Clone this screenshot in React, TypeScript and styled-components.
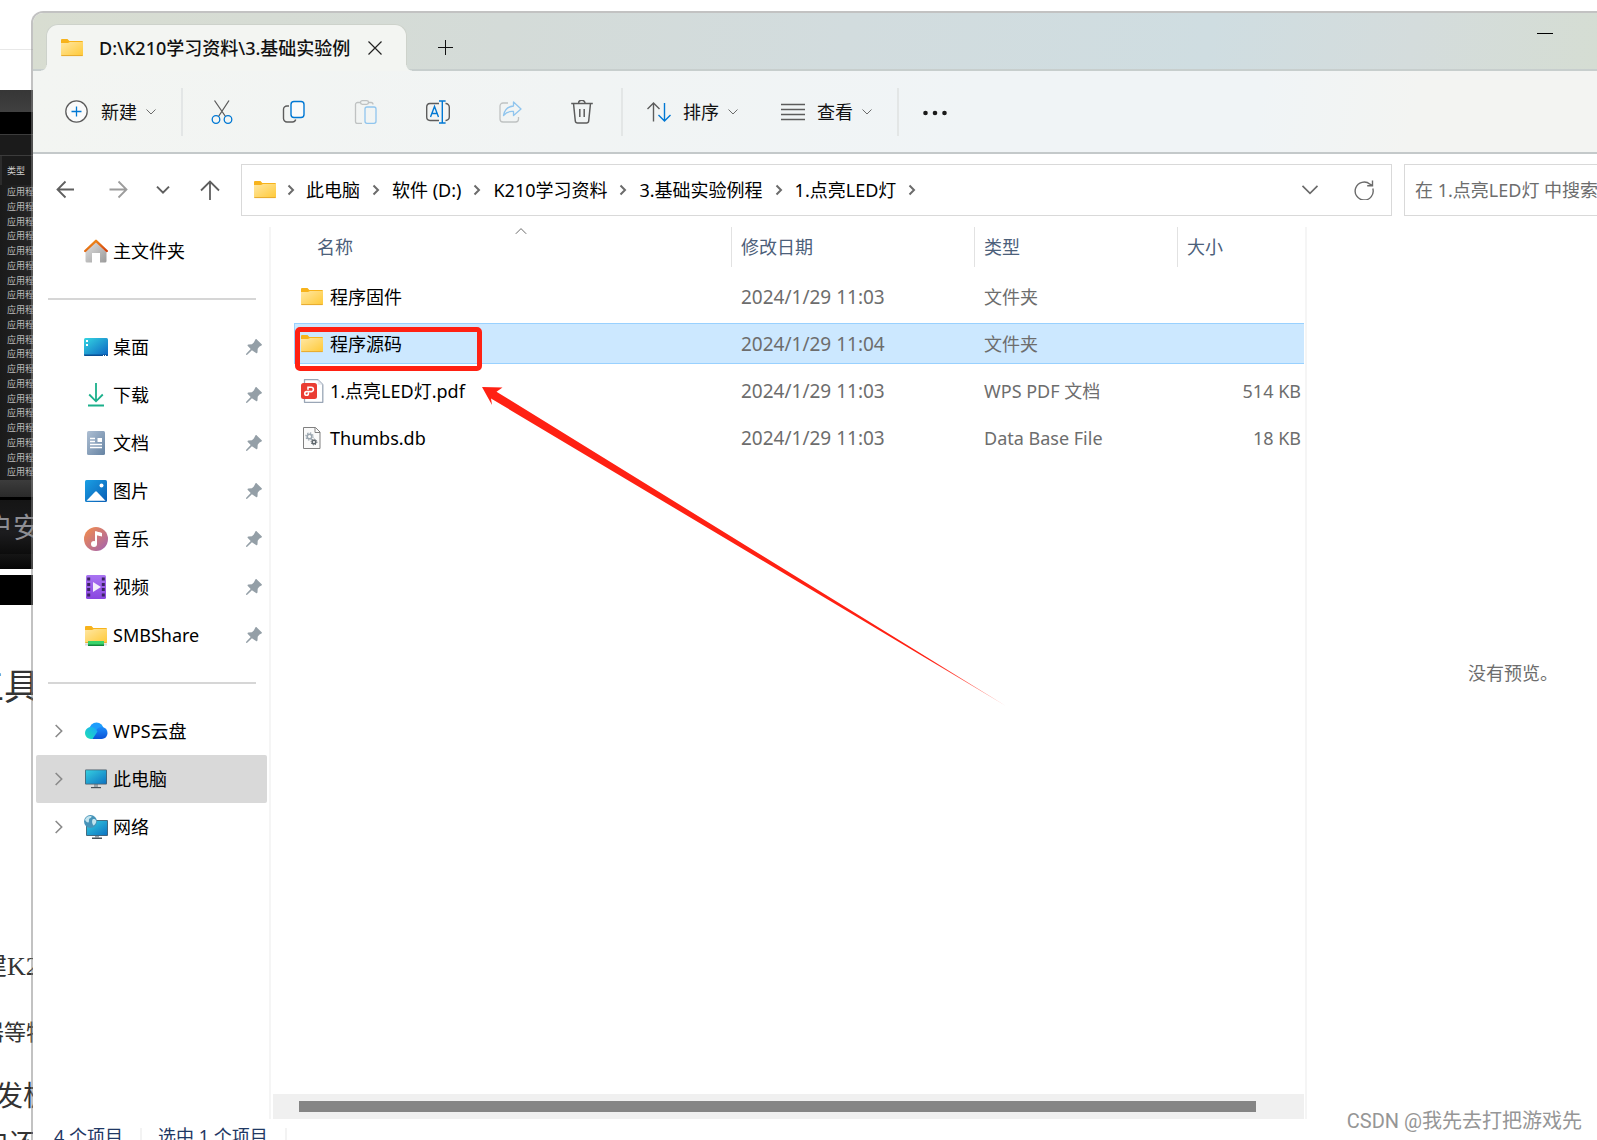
import React from 'react';
import styled, { createGlobalStyle } from 'styled-components';

const GlobalStyle = createGlobalStyle`
  *, *::before, *::after { box-sizing: border-box; }
  html, body { margin: 0; padding: 0; }
  body {
    background: #fff;
    color: #111;
    font: 18px/24px 'Noto Sans', 'Noto Sans CJK SC', sans-serif;
  }
  button, input { font: inherit; color: inherit; }
`;

/* ---------- page shell ---------- */

const Desktop = styled.div`
  position: relative;
  display: flex;
  height: 100vh;
  overflow: hidden;
`;

const Backdrop = styled.aside`
  flex: none;
  width: 33px;
  height: 1160px;
  overflow: hidden;
  white-space: nowrap;
  color: #333;
`;

const BackBand = styled.div<{ $h: number; $bg?: string; $line?: string }>`
  height: ${(p) => p.$h}px;
  background: ${(p) => p.$bg || 'transparent'};
  border-bottom: ${(p) => (p.$line ? `1px solid ${p.$line}` : '0')};
`;

const BackLabel = styled.div`
  height: 29px;
  padding-left: 5px;
  border-left: 2px solid #2c2c2c;
  background: #1b1b1b;
  color: #cfcfcf;
  font-size: 9px;
  line-height: 29px;
`;

const BackRows = styled.div`
  display: grid;
  grid-auto-rows: 1fr;
  height: 295px;
  padding-left: 7px;
  background: linear-gradient(90deg, #1a1a1a, #262626);
  color: #bdbdbd;
  font-size: 9px;
  line-height: 14px;
`;

const BackText = styled.div<{ $h: number; $size: number; $indent: number; $serif?: boolean; $dark?: boolean }>`
  height: ${(p) => p.$h}px;
  line-height: ${(p) => p.$h}px;
  font-size: ${(p) => p.$size}px;
  text-indent: ${(p) => p.$indent}px;
  color: ${(p) => (p.$dark ? '#8d8d92' : '#333')};
  background: ${(p) => (p.$dark ? 'linear-gradient(#151515, #1c1c1e 60%, #0c0c0c)' : 'transparent')};
  font-family: ${(p) =>
    p.$serif
      ? "'Liberation Serif', 'Noto Sans CJK SC', serif"
      : "'Noto Sans', 'Noto Sans CJK SC', sans-serif"};
`;

const Window = styled.main`
  display: flex;
  flex: 1;
  flex-direction: column;
  min-width: 0;
  height: calc(100vh + 4px);
  margin: 11px 0 0 -2px;
  border: 2px solid rgba(133, 133, 133, 0.5);
  border-width: 2px 0 0 2px;
  border-radius: 12px 0 0 0;
  background: #fff;
  background-clip: padding-box;
  overflow: hidden;
`;

/* ---------- title bar ---------- */

const TitleBar = styled.header`
  display: flex;
  flex: none;
  height: 58px;
  padding: 11px 20px 0 13px;
  border-bottom: 2px solid #c7cecd;
  background: linear-gradient(100deg, #d8ddd1, #d4dbd8 30%, #d2dcde 52%, #cfdde1 75%, #d4dcdc 88%, #d5ddd3);
`;

const Tab = styled.div`
  position: relative;
  display: flex;
  align-items: center;
  width: 361px;
  margin-bottom: -2px;
  padding: 0 11px 0 13px;
  border: 1px solid #cdd2cb;
  border-bottom: 0;
  border-radius: 12px 12px 0 0;
  background: #f3f5f2;

  &::before,
  &::after {
    content: '';
    position: absolute;
    bottom: 0;
    width: 6px;
    height: 6px;
  }
  &::before {
    right: 100%;
    background: radial-gradient(circle at 0 0, transparent 5px, #f3f5f2 6px);
  }
  &::after {
    left: 100%;
    background: radial-gradient(circle at 100% 0, transparent 5px, #f3f5f2 6px);
  }
`;

const TabTitle = styled.span`
  flex: 1;
  min-width: 0;
  margin: 0 4px 0 15px;
  overflow: hidden;
  white-space: nowrap;
  font-weight: 500;
`;

const PlainButton = styled.button<{ $w?: number }>`
  display: flex;
  flex: none;
  align-items: center;
  justify-content: center;
  width: ${(p) => p.$w || 40}px;
  height: 40px;
  padding: 0;
  border: 0;
  background: none;
`;

const TabActions = styled.div`
  display: flex;
  flex: 1;
  align-items: center;
  padding-left: 18px;
`;

const WindowControls = styled.div`
  margin-top: -11px;
`;

/* ---------- toolbar ---------- */

const Toolbar = styled.div`
  display: flex;
  flex: none;
  align-items: center;
  height: 83px;
  padding-left: 8px;
  border-bottom: 2px solid #c4c9ca;
  background: linear-gradient(100deg, #f3f5f2, #f1f4f4 35%, #f0f4f6 60%, #f0f4f6 78%, #f3f4f2 88%);
`;

const ToolGroup = styled.div`
  display: flex;
  margin: 0 3px;
`;

const MenuButton = styled.button<{ $end?: number }>`
  display: flex;
  align-items: center;
  height: 48px;
  padding: 0 ${(p) => p.$end || 24}px 0 24px;
  border: 0;
  background: none;
  white-space: nowrap;

  span { margin: 0 8px 0 12px; }
`;

const Divider = styled.div`
  flex: none;
  width: 2px;
  height: 48px;
  background: #e3e6e6;
`;

/* ---------- address row ---------- */

const AddressRow = styled.div`
  display: flex;
  flex: none;
  height: 73px;
  padding: 10px 0 11px 8px;
`;

const NavButtons = styled.nav`
  display: flex;
  align-items: center;
`;

const AddressBox = styled.div`
  display: flex;
  flex: 1;
  align-items: center;
  min-width: 0;
  padding-left: 11px;
  border: 1px solid #d9d9d9;
`;

const Crumbs = styled.ol`
  display: flex;
  flex: 1;
  margin: 0;
  padding: 0;
  list-style: none;
  white-space: nowrap;
`;

const Crumb = styled.li`
  display: flex;
  align-items: center;

  svg { margin: 0 9px 0 8px; }
  a { color: #000; text-decoration: none; }
  a + svg { margin: 0 10px; }
`;

const SearchBox = styled.input`
  width: 193px;
  margin-left: 12px;
  padding: 0 0 0 10px;
  border: 1px solid #d9d9d9;
  border-right: 0;
  border-radius: 0;
  background: #fff;
  outline: 0;

  &::placeholder { color: #6d6d6d; opacity: 1; }
`;

/* ---------- body ---------- */

const Body = styled.div`
  display: flex;
  flex: 1;
  min-height: 0;
`;

const Sidebar = styled.nav`
  flex: none;
  width: 238px;
  border-right: 2px solid #f5f5f5;
`;

const SideItem = styled.a<{ $active?: boolean }>`
  display: grid;
  grid-template-columns: 33px 24px 1fr 16px;
  align-items: center;
  height: 48px;
  margin: 0 2px 0 3px;
  padding: 0 5px 0 15px;
  border-radius: 2px;
  background: ${(p) => (p.$active ? '#d9d9d9' : 'transparent')};
  color: #000;
  text-decoration: none;
  white-space: nowrap;

  span { padding-left: 5px; }
`;

const SideRule = styled.hr`
  height: 2px;
  margin: 23px 13px 23px 15px;
  border: 0;
  background: #d6d6d6;
`;

const FilePane = styled.section`
  position: relative;
  display: flex;
  flex: 1;
  flex-direction: column;
  justify-content: space-between;
  min-width: 0;
`;

const TableWrap = styled.div`
  padding: 0 1px 0 23px;
`;

const FileTable = styled.table`
  width: 100%;
  table-layout: fixed;
  border-collapse: collapse;
  white-space: nowrap;

  th, td { padding: 0; font-weight: 400; text-align: left; }
  th { height: 46px; vertical-align: top; color: #4c607a; }
  td { height: 47px; color: #6d6d6d; }
`;

const HeadCell = styled.div<{ $first?: boolean }>`
  position: relative;
  height: 40px;
  margin-left: ${(p) => (p.$first ? 16 : 0)}px;
  padding-left: ${(p) => (p.$first ? 7 : 9)}px;
  border-left: ${(p) => (p.$first ? 0 : 1)}px solid #e2e2e2;
  line-height: 40px;

  svg {
    position: absolute;
    top: 0;
    left: calc(50% - 6px);
  }
`;

const Cell = styled.div<{ $selected?: boolean; $kind?: 'name' | 'date' | 'size' }>`
  display: flex;
  align-items: center;
  gap: 6px;
  height: 41px;
  padding: ${(p) => (p.$kind === 'name' ? '0 0 0 5px' : '0 3px 0 10px')};
  justify-content: ${(p) => (p.$kind === 'size' ? 'flex-end' : 'flex-start')};
  border: 1px solid ${(p) => (p.$selected ? '#99d1ff' : 'transparent')};
  border-width: 1px 0 1px ${(p) => (p.$kind === 'name' ? 1 : 0)}px;
  background: ${(p) => (p.$selected ? '#cce8ff' : 'transparent')};
  color: ${(p) => (p.$kind === 'name' ? '#000' : '#6d6d6d')};
  font-size: ${(p) => (p.$kind === 'date' ? 19 : 18)}px;
`;

const ScrollTrack = styled.div`
  height: 25px;
  margin: 0 1px 0 2px;
  padding: 7px 48px 7px 26px;
  background: #f0f0f0;
`;

const ScrollThumb = styled.div`
  height: 11px;
  background: #858585;
`;

const Preview = styled.section`
  display: flex;
  flex: none;
  align-items: center;
  width: 292px;
  padding-left: 161px;
  border-left: 2px solid #f5f5f5;
  color: #6d6d6d;
  white-space: nowrap;
`;

const StatusBar = styled.footer`
  display: flex;
  flex: none;
  height: 36px;
  padding-left: 5px;
  color: #1f3864;
  line-height: 34px;
  white-space: nowrap;
`;

const StatusItem = styled.span`
  display: flex;
  padding-left: 16px;

  &::after {
    content: '';
    width: 2px;
    margin: 9px 0 0 17px;
    background: #f3f3f3;
  }
`;

/* ---------- annotations over the window ---------- */

const HighlightBox = styled.div`
  position: absolute;
  top: 100px;
  left: 24px;
  width: 187px;
  height: 44px;
  border: 5px solid #ff2113;
  border-radius: 5px;
`;

const ArrowMark = styled.svg`
  position: absolute;
  top: 159px;
  left: 211px;
`;

const Watermark = styled.div`
  position: absolute;
  right: 15px;
  bottom: 5px;
  color: #969696;
  font: 20px/28px Roboto, 'Noto Sans CJK SC', sans-serif;
`;

const Svg = styled.svg`
  display: block;
  flex: none;
  fill: none;
`;

/* ---------- icons ---------- */

const GREY = '#5c5c5c';
const BLUE = '#0078d4';

const Chevron = ({ size, d, color = '#6b6b6b', w = 1.5 }: { size: number; d: 'down' | 'right' | 'up'; color?: string; w?: number }) => (
  <Svg width={size} height={size} viewBox="0 0 12 12" stroke={color} strokeWidth={w} aria-hidden="true">
    {d === 'down' && <path d="M1.5 3.5 6 8l4.5-4.5" />}
    {d === 'right' && <path d="M3.5 1.5 8 6l-4.5 4.5" />}
    {d === 'up' && <path d="M.8 6.8 6 1.6l5.2 5.2" />}
  </Svg>
);

const FolderIcon = ({ share }: { share?: boolean }) => (
  <Svg width="24" height="24" viewBox="0 0 24 24" aria-hidden="true">
    <defs>
      <linearGradient id="folder" x1="0" y1="0" x2="1" y2="1">
        <stop offset="0" stopColor="#ffe7a3" />
        <stop offset="1" stopColor="#ffc936" />
      </linearGradient>
    </defs>
    <path d="M1 4a1 1 0 0 1 1-1h5.5l1.8 2H22a1 1 0 0 1 1 1v3H1z" fill="#f7b31c" />
    <path d="M1 7h7l2-1h13v13a1 1 0 0 1-1 1H2a1 1 0 0 1-1-1z" fill="url(#folder)" />
    <path d="M1.3 19.6h21.4" stroke="#e6a92e" strokeWidth="1" />
    {share && (
      <g>
        <path d="M1 20.5h22v2H1z" fill="#d5d9dc" />
        <path d="M4 18h16v4.5H4z" fill="#3ad46a" />
        <path d="M4 21.5h16v1.5H4z" fill="#12863c" />
      </g>
    )}
  </Svg>
);

const PinIcon = () => (
  <Svg width="16" height="16" viewBox="0 0 16 16" aria-hidden="true">
    <path
      fill="#949fa7"
      d="M9.4.4c.5-.4 1-.4 1.400 0l4.900 4.800c.4.4.3 1.100-.3 1.300l-2.200 1.200-1.500 2-.2 3.500c-.1.900-1 1.200-1.500.7L5.900 11.200 1.200 15.800 0 16l.2-1.200 4.500-4.800L1.800 7.100c-.6-.6-.2-1.400.7-1.500l3.400-.3 1.900-1.800z"
    />
  </Svg>
);

const HomeIcon = () => (
  <Svg width="24" height="24" viewBox="0 0 24 24" aria-hidden="true">
    <defs>
      <linearGradient id="homeWall" x1="0" y1="0" x2="1" y2="1">
        <stop offset="0" stopColor="#e2e2e2" />
        <stop offset="1" stopColor="#9a9a9a" />
      </linearGradient>
      <linearGradient id="homeRoof" x1="0" y1="0" x2="1" y2="1">
        <stop offset="0" stopColor="#f59a1b" />
        <stop offset="1" stopColor="#d2400f" />
      </linearGradient>
    </defs>
    <path d="M12 3 1.500 13v9a1.500 1.500 0 0 0 1.500 1.500h5V14h8v9.500h5a1.500 1.500 0 0 0 1.500-1.500v-9z" fill="url(#homeWall)" />
    <path d="M1.200 12 12 1.800 22.800 12" stroke="url(#homeRoof)" strokeWidth="2.400" strokeLinecap="round" strokeLinejoin="round" />
  </Svg>
);

const DesktopIcon = () => (
  <Svg width="24" height="24" viewBox="0 0 24 24" aria-hidden="true">
    <defs>
      <linearGradient id="screen" x1="0" y1="0" x2="1" y2="1">
        <stop offset="0" stopColor="#35d6e2" />
        <stop offset="1" stopColor="#0b62c1" />
      </linearGradient>
    </defs>
    <rect y="3" width="24" height="18" rx="1.500" fill="url(#screen)" />
    <path d="M0 19.500h24v.5a1 1 0 0 1-1 1H1a1 1 0 0 1-1-1z" fill="#0a4f94" />
    <path d="M2 5h2v2H2zM2 9h2v2H2zM19 20h1v1h-1zM21 20h1v1h-1z" fill="#fff" />
  </Svg>
);

const DownloadIcon = () => (
  <Svg width="24" height="24" viewBox="0 0 24 24" stroke="#1bb08b" strokeWidth="1.800" aria-hidden="true">
    <path d="M12 0v18M5.200 11.500 12 18.300l6.800-6.800M4 22.500h16" />
  </Svg>
);

const DocumentIcon = () => (
  <Svg width="24" height="24" viewBox="0 0 24 24" aria-hidden="true">
    <defs>
      <linearGradient id="doc" x1="0" y1="0" x2="1" y2="1">
        <stop offset="0" stopColor="#aebfd3" />
        <stop offset="1" stopColor="#6683a3" />
      </linearGradient>
    </defs>
    <rect x="3" width="18" height="24" rx="1.500" fill="url(#doc)" />
    <path d="M6 7.500h5M6 10.500h5M6 13.500h12M6 16.500h12" stroke="#fff" strokeWidth="1.300" />
    <path d="M13.500 7H18v4h-4.500z" fill="#fff" />
  </Svg>
);

const PictureIcon = () => (
  <Svg width="24" height="24" viewBox="0 0 24 24" aria-hidden="true">
    <defs>
      <linearGradient id="pic" x1="0" y1="0" x2="1" y2="1">
        <stop offset="0" stopColor="#1a9fe4" />
        <stop offset="1" stopColor="#0a5eb5" />
      </linearGradient>
    </defs>
    <rect x="1" y="1" width="22" height="22" rx="1.500" fill="url(#pic)" />
    <path d="m2.500 21.800 8.600-9a1.300 1.300 0 0 1 1.800 0l8.600 9z" fill="#fff" />
    <circle cx="17.500" cy="6.500" r="2" fill="#fff" />
  </Svg>
);

const MusicIcon = () => (
  <Svg width="24" height="24" viewBox="0 0 24 24" aria-hidden="true">
    <defs>
      <linearGradient id="music" x1="0" y1="0" x2="1" y2="1">
        <stop offset="0.100" stopColor="#ee8a52" />
        <stop offset="0.900" stopColor="#a865a8" />
      </linearGradient>
    </defs>
    <circle cx="12" cy="12" r="12" fill="url(#music)" />
    <circle cx="10" cy="17" r="3" fill="#fff" />
    <path d="M12 17V5.500l4.500 1.300v2" stroke="#fff" strokeWidth="2" />
    <path d="M11 4.500h1.500L18 6v3.500l-5.500-1.200z" fill="#fff" />
  </Svg>
);

const VideoIcon = () => (
  <Svg width="24" height="24" viewBox="0 0 24 24" aria-hidden="true">
    <defs>
      <linearGradient id="video" x1="0" y1="0" x2="0" y2="1">
        <stop offset="0" stopColor="#a974f2" />
        <stop offset="1" stopColor="#8a45e0" />
      </linearGradient>
    </defs>
    <rect x="2" width="20" height="24" rx="1.500" fill="url(#video)" />
    <path d="M3.200 2.500h3v3h-3zM3.200 8h3v3h-3zM3.200 13h3v3h-3zM3.200 18.500h3v3h-3zM17.800 2.500h3v3h-3zM17.800 8h3v3h-3zM17.800 13h3v3h-3zM17.800 18.500h3v3h-3z" fill="#3c2463" />
    <path d="m9 7 8 5-8 5z" fill="#f3ecfb" />
  </Svg>
);

const CloudIcon = () => (
  <Svg width="24" height="24" viewBox="0 0 24 24" aria-hidden="true">
    <defs>
      <linearGradient id="cloudLeft" x1="0" y1="1" x2="1" y2="0">
        <stop offset="0" stopColor="#1ee0b4" />
        <stop offset="1" stopColor="#19a8fa" />
      </linearGradient>
      <linearGradient id="cloudRight" x1="0" y1="0" x2="0" y2="1">
        <stop offset="0" stopColor="#1c8dfb" />
        <stop offset="1" stopColor="#0b52d6" />
      </linearGradient>
    </defs>
    <circle cx="12.500" cy="10.500" r="7" fill="#1d9dfc" />
    <path d="M8 20h9.500a6 6 0 1 0-4.500-10z" fill="url(#cloudRight)" />
    <path d="M7 20a6 6 0 1 1 4.500-10l2 2.500L8.500 20z" fill="url(#cloudLeft)" />
  </Svg>
);

const ComputerIcon = () => (
  <Svg width="24" height="24" viewBox="0 0 24 24" aria-hidden="true">
    <defs>
      <linearGradient id="pc" x1="0" y1="0" x2="1" y2="1">
        <stop offset="0" stopColor="#35cfe0" />
        <stop offset="1" stopColor="#0d73c2" />
      </linearGradient>
    </defs>
    <path d="M10 17h4v3h-4z" fill="#9aa4ab" />
    <path d="M7 20h10v1.200H7z" fill="#4a5258" />
    <rect x="1" y="2.500" width="22" height="15" rx="1" fill="#4c5f6d" />
    <rect x="1.800" y="3.300" width="20.400" height="13.400" fill="url(#pc)" />
  </Svg>
);

const NetworkIcon = () => (
  <Svg width="24" height="24" viewBox="0 0 24 24" aria-hidden="true">
    <path d="M11 20h4v2.500h-4z" fill="#9aa4ab" />
    <path d="M8 22.500h10V24H8z" fill="#4a5258" />
    <rect x="2" y="5" width="22" height="16" rx="1" fill="#4c5f6d" />
    <rect x="2.800" y="5.800" width="20.400" height="14.400" fill="url(#pc)" />
    <circle cx="6.500" cy="6.500" r="6.500" fill="#4794b9" />
    <path d="M1 4.500C2.500 1.500 5 .6 7.500 1.200c.5 1.300-1 2-2.300 2.600-.6 1.200.3 2.200-.7 3.700C2.500 7.500 1.300 6 1 4.500zM8.500 4.500c1.500-.8 3-.4 3.800 1.500-.2 2-1.300 3.800-2.800 4.500-1.200-1.500-2-4-1-6z" fill="#c3e4ee" />
  </Svg>
);

const PdfIcon = () => (
  <Svg width="24" height="24" viewBox="0 0 24 24" aria-hidden="true">
    <path d="M4.500.7h13.300l5 5v17.600H4.500z" fill="#fff" stroke="#9aa6b6" strokeWidth="1.300" strokeLinejoin="round" />
    <path d="m17.800.7 5 5h-5z" fill="#e6eaef" />
    <rect x="1" y="4" width="16" height="16" rx="2.500" fill="#ea3d33" />
    <path d="M8 10.300V8.200h3.200a2.200 2.200 0 0 1 0 4.400H6.600a1.800 1.800 0 1 0 1.800 1.800" stroke="#fff" strokeWidth="1.600" strokeLinecap="round" />
  </Svg>
);

const DbIcon = () => (
  <Svg width="24" height="24" viewBox="0 0 24 24" aria-hidden="true">
    <path d="M3.500 1.500h12l4.500 4.500v16.500H3.500z" fill="#fafafa" stroke="#808080" />
    <path d="M15 1.500V6.500h5" stroke="#808080" />
    <circle cx="9.500" cy="10.500" r="2.300" stroke="#9aa5ae" strokeWidth="1.600" />
    <circle cx="9.500" cy="10.500" r="3.600" stroke="#9aa5ae" strokeWidth="1.200" strokeDasharray="1.400 1.430" />
    <circle cx="14" cy="16" r="1.800" stroke="#5f676d" strokeWidth="1.500" />
    <circle cx="14" cy="16" r="2.900" stroke="#5f676d" strokeDasharray="1.100 1.180" />
  </Svg>
);

const NewIcon = () => (
  <Svg width="24" height="24" viewBox="0 0 24 24" strokeWidth="1.300" aria-hidden="true">
    <circle cx="11.500" cy="11.500" r="10.700" stroke={GREY} fill="#fafbfb" />
    <path d="M11.500 6.500v10M6.500 11.500h10" stroke={BLUE} />
  </Svg>
);

const CutIcon = () => (
  <Svg width="24" height="24" viewBox="0 0 24 24" strokeWidth="1.300" aria-hidden="true">
    <path d="M4.500.5 15.500 16.500M19 .5 8.500 16.500" stroke={GREY} />
    <circle cx="6" cy="19.500" r="3.800" stroke={BLUE} />
    <circle cx="18" cy="19.500" r="3.800" stroke={BLUE} />
  </Svg>
);

const CopyIcon = () => (
  <Svg width="24" height="24" viewBox="0 0 24 24" strokeWidth="1.400" aria-hidden="true">
    <path d="M7 6H5a3.500 3.500 0 0 0-3.500 3.500v9A3.500 3.500 0 0 0 5 22h5.500a3.500 3.500 0 0 0 3.200-2.500" stroke={GREY} />
    <rect x="9" y="1.500" width="13" height="16" rx="3" stroke={BLUE} fill="#fafbfb" />
  </Svg>
);

const PasteIcon = () => (
  <Svg width="24" height="24" viewBox="0 0 24 24" strokeWidth="1.300" aria-hidden="true">
    <path d="M7 2.500H3.500a2 2 0 0 0-2 2v17a2 2 0 0 0 2 2H8M14 2.500h3a2 2 0 0 1 2 2" stroke="#bfc2c2" />
    <rect x="6.500" y=".7" width="8" height="3.600" rx="1.800" stroke="#bfc2c2" />
    <rect x="11" y="7" width="11" height="16.300" rx="2" stroke="#90c5ee" />
  </Svg>
);

const RenameIcon = () => (
  <Svg width="24" height="24" viewBox="0 0 24 24" strokeWidth="1.400" aria-hidden="true">
    <path d="M13 3.500H4A3.500 3.500 0 0 0 .7 7v10A3.500 3.500 0 0 0 4 20.500h9M19.500 3.500A3.500 3.500 0 0 1 23.300 7v10a3.500 3.500 0 0 1-3.800 3.500" stroke={GREY} />
    <path d="m4.500 17 4-10.500 4 10.500M5.800 13.500h5.400M16.300 1v22M13 1h6.600M13 23h6.600" stroke={BLUE} />
  </Svg>
);

const ShareIcon = () => (
  <Svg width="24" height="24" viewBox="0 0 24 24" strokeWidth="1.300" strokeLinejoin="round" aria-hidden="true">
    <path d="M10 3H5a3 3 0 0 0-3 3v13a3 3 0 0 0 3 3h12.500a3 3 0 0 0 3-3v-2" stroke="#bfc2c2" />
    <path d="M15.500 2 23 9l-7.500 6.500v-4C11 11 8 12.500 5.500 15.500 6.500 9.500 10 6.500 15.500 6z" stroke="#90c5ee" />
  </Svg>
);

const TrashIcon = () => (
  <Svg width="24" height="24" viewBox="0 0 24 24" strokeWidth="1.500" stroke={GREY} aria-hidden="true">
    <path d="M1.200 3.500h21.600M8.500 3.500a3.300 3.300 0 0 1 6.600 0M3.500 3.500l1.800 17.500A2.300 2.300 0 0 0 7.600 23h8.800a2.300 2.300 0 0 0 2.300-2l1.800-17.500M9.800 9v8M14.200 9v8" />
  </Svg>
);

const SortIcon = () => (
  <Svg width="24" height="24" viewBox="0 0 24 24" strokeWidth="1.400" aria-hidden="true">
    <path d="M6.500 21.500V3M.5 9l6-6 6 6" stroke={GREY} />
    <path d="M17.500 3v18M11.500 15l6 6 6-6" stroke={BLUE} />
  </Svg>
);

const ViewIcon = () => (
  <Svg width="24" height="24" viewBox="0 0 24 24" strokeWidth="1.300" stroke={GREY} aria-hidden="true">
    <path d="M0 4.500h24M0 9.500h24M0 14.500h24M0 19.500h24" />
  </Svg>
);

const MoreIcon = () => (
  <Svg width="24" height="24" viewBox="0 0 24 24" aria-hidden="true">
    <g fill="#1a1a1a">
      <circle cx="2.500" cy="13" r="2.300" />
      <circle cx="12" cy="13" r="2.300" />
      <circle cx="21.500" cy="13" r="2.300" />
    </g>
  </Svg>
);

const ArrowIcon = ({ d, color }: { d: string; color: string }) => (
  <Svg width="20" height="20" viewBox="0 0 20 20" stroke={color} strokeWidth="1.800" aria-hidden="true">
    <path d={d} />
  </Svg>
);

const RefreshIcon = () => (
  <Svg width="20" height="20" viewBox="0 0 20 20" stroke="#6b6b6b" strokeWidth="1.400" aria-hidden="true">
    <path d="M18.800 8.500A9 9 0 1 1 16 4.200l2.200 1.300M18.500.5v5.300h-5.300" />
  </Svg>
);

/* ---------- data ---------- */

const crumbs = ['此电脑', '软件 (D:)', 'K210学习资料', '3.基础实验例程', '1.点亮LED灯'];

const pinned = [
  { label: '桌面', icon: <DesktopIcon /> },
  { label: '下载', icon: <DownloadIcon /> },
  { label: '文档', icon: <DocumentIcon /> },
  { label: '图片', icon: <PictureIcon /> },
  { label: '音乐', icon: <MusicIcon /> },
  { label: '视频', icon: <VideoIcon /> },
  { label: 'SMBShare', icon: <FolderIcon share /> },
];

const places = [
  { label: 'WPS云盘', icon: <CloudIcon /> },
  { label: '此电脑', icon: <ComputerIcon />, active: true },
  { label: '网络', icon: <NetworkIcon /> },
];

const files = [
  { name: '程序固件', date: '2024/1/29 11:03', type: '文件夹', size: '', icon: <FolderIcon /> },
  { name: '程序源码', date: '2024/1/29 11:04', type: '文件夹', size: '', icon: <FolderIcon />, selected: true },
  { name: '1.点亮LED灯.pdf', date: '2024/1/29 11:03', type: 'WPS PDF 文档', size: '514 KB', icon: <PdfIcon /> },
  { name: 'Thumbs.db', date: '2024/1/29 11:03', type: 'Data Base File', size: '18 KB', icon: <DbIcon /> },
];

const tools = [
  { label: '剪切', icon: <CutIcon /> },
  { label: '复制', icon: <CopyIcon /> },
  { label: '粘贴', icon: <PasteIcon /> },
  { label: '重命名', icon: <RenameIcon /> },
  { label: '共享', icon: <ShareIcon /> },
  { label: '删除', icon: <TrashIcon /> },
];

const backRows = Array.from({ length: 20 }, (_, i) => i);

export default function App() {
  return (
    <Desktop>
      <GlobalStyle />

      <Backdrop>
        <BackBand $h={50} $line="#e8e8e8" />
        <BackBand $h={40} />
        <BackBand $h={22} $bg="linear-gradient(#363636, #404040)" />
        <BackBand $h={23} $bg="#000" $line="#3c3c3c" />
        <BackBand $h={21} $bg="#1b1b1b" $line="#3c3c3c" />
        <BackLabel>类型</BackLabel>
        <BackRows>
          {backRows.map((i) => (
            <span key={i}>应用程</span>
          ))}
        </BackRows>
        <BackBand $h={17} $bg="linear-gradient(#3c3c3c, #2a2a2a)" />
        <BackBand $h={3} $bg="#000" />
        <BackText $h={54} $size={28} $indent={-15} $dark>户安</BackText>
        <BackBand $h={15} $bg="linear-gradient(#151515, #060606)" />
        <BackBand $h={6} />
        <BackBand $h={30} $bg="#000" />
        <BackBand $h={60} />
        <BackText $h={44} $size={36} $indent={-32}>工具</BackText>
        <BackBand $h={236} />
        <BackText $h={44} $size={26} $indent={-19} $serif>建K2</BackText>
        <BackBand $h={20} />
        <BackText $h={44} $size={22} $indent={-18}>器等特</BackText>
        <BackBand $h={20} />
        <BackText $h={44} $size={28} $indent={-5}>发板</BackText>
        <BackBand $h={4} />
        <BackText $h={44} $size={26} $indent={-17}>电还</BackText>
      </Backdrop>

      <Window>
        <TitleBar>
          <Tab>
            <FolderIcon />
            <TabTitle>D:\K210学习资料\3.基础实验例</TabTitle>
            <PlainButton aria-label="关闭标签页">
              <Svg width="14" height="14" viewBox="0 0 14 14" stroke="#222" strokeWidth="1.200" aria-hidden="true">
                <path d="m.5.5 13 13M13.500.5l-13 13" />
              </Svg>
            </PlainButton>
          </Tab>
          <TabActions>
            <PlainButton aria-label="新建标签页">
              <Svg width="16" height="16" viewBox="0 0 16 16" stroke="#111" aria-hidden="true">
                <path d="M8.500 1v15M1 8.500h15" />
              </Svg>
            </PlainButton>
          </TabActions>
          <WindowControls>
            <PlainButton $w={64} aria-label="最小化">
              <Svg width="16" height="1" viewBox="0 0 16 1" aria-hidden="true">
                <path d="M0 0h16v1H0z" fill="#000" />
              </Svg>
            </PlainButton>
          </WindowControls>
        </TitleBar>

        <Toolbar>
          <MenuButton>
            <NewIcon />
            <span>新建</span>
            <Chevron size={12} d="down" w={1} />
          </MenuButton>
          <Divider />
          <ToolGroup>
            {tools.map((t) => (
              <PlainButton key={t.label} $w={72} aria-label={t.label}>
                {t.icon}
              </PlainButton>
            ))}
          </ToolGroup>
          <Divider />
          <MenuButton $end={18}>
            <SortIcon />
            <span>排序</span>
            <Chevron size={12} d="down" w={1} />
          </MenuButton>
          <MenuButton>
            <ViewIcon />
            <span>查看</span>
            <Chevron size={12} d="down" w={1} />
          </MenuButton>
          <Divider />
          <PlainButton $w={72} aria-label="查看更多">
            <MoreIcon />
          </PlainButton>
        </Toolbar>

        <AddressRow>
          <NavButtons>
            <PlainButton $w={48} aria-label="后退">
              <ArrowIcon color="#5f5f5f" d="M19 9.500H2.500M10.500 1.500l-8 8 8 8" />
            </PlainButton>
            <PlainButton $w={58} aria-label="前进">
              <ArrowIcon color="#9c9c9c" d="M1.500 9.500H18M10.500 1.500l8 8-8 8" />
            </PlainButton>
            <PlainButton $w={32} aria-label="最近位置">
              <Chevron size={16} d="down" color="#5f5f5f" />
            </PlainButton>
            <PlainButton $w={62} aria-label="上移">
              <ArrowIcon color="#5f5f5f" d="M10 20V2M1 10.500l9-9 9 9" />
            </PlainButton>
          </NavButtons>
          <AddressBox>
            <FolderIcon />
            <Crumbs>
              <Crumb>
                <Chevron size={12} d="right" w={2} />
              </Crumb>
              {crumbs.map((c) => (
                <Crumb key={c}>
                  <a href="#path">{c}</a>
                  <Chevron size={12} d="right" w={2} />
                </Crumb>
              ))}
            </Crumbs>
            <PlainButton $w={54} aria-label="历史记录">
              <Chevron size={20} d="down" w={1} />
            </PlainButton>
            <PlainButton $w={54} aria-label="刷新">
              <RefreshIcon />
            </PlainButton>
          </AddressBox>
          <SearchBox type="text" aria-label="搜索" placeholder="在 1.点亮LED灯 中搜索" />
        </AddressRow>

        <Body>
          <Sidebar>
            <SideItem href="#home">
              <i />
              <HomeIcon />
              <span>主文件夹</span>
            </SideItem>
            <SideRule />
            {pinned.map((p) => (
              <SideItem key={p.label} href="#pinned">
                <i />
                {p.icon}
                <span>{p.label}</span>
                <PinIcon />
              </SideItem>
            ))}
            <SideRule />
            {places.map((p) => (
              <SideItem key={p.label} href="#place" $active={p.active}>
                <Chevron size={16} d="right" color="#8a8a8a" w={1.2} />
                {p.icon}
                <span>{p.label}</span>
              </SideItem>
            ))}
          </Sidebar>

          <FilePane>
            <TableWrap>
              <FileTable>
                <colgroup>
                  <col />
                  <col width="243" />
                  <col width="203" />
                  <col width="127" />
                </colgroup>
                <thead>
                  <tr>
                    <th>
                      <HeadCell $first>
                        名称
                        <Chevron size={12} d="up" w={1} />
                      </HeadCell>
                    </th>
                    <th><HeadCell>修改日期</HeadCell></th>
                    <th><HeadCell>类型</HeadCell></th>
                    <th><HeadCell>大小</HeadCell></th>
                  </tr>
                </thead>
                <tbody>
                  {files.map((f) => (
                    <tr key={f.name}>
                      <td>
                        <Cell $kind="name" $selected={f.selected}>
                          {f.icon}
                          {f.name}
                        </Cell>
                      </td>
                      <td><Cell $kind="date" $selected={f.selected}>{f.date}</Cell></td>
                      <td><Cell $selected={f.selected}>{f.type}</Cell></td>
                      <td><Cell $kind="size" $selected={f.selected}>{f.size}</Cell></td>
                    </tr>
                  ))}
                </tbody>
              </FileTable>
            </TableWrap>
            <ScrollTrack>
              <ScrollThumb />
            </ScrollTrack>

            <HighlightBox />
            <ArrowMark width="526" height="322" viewBox="0 0 526 322" aria-hidden="true">
              <defs>
                <linearGradient id="arrow" x1="0" y1="0" x2="524" y2="320" gradientUnits="userSpaceOnUse">
                  <stop offset="0.850" stopColor="#ff2113" />
                  <stop offset="1" stopColor="#ff2113" stopOpacity="0.500" />
                </linearGradient>
              </defs>
              <path d="M0 1 20.500 1.500 14.500 5.700 524 320 9 12.500 10 19z" fill="url(#arrow)" />
            </ArrowMark>
          </FilePane>

          <Preview>没有预览。</Preview>
        </Body>

        <StatusBar>
          <StatusItem>4 个项目</StatusItem>
          <StatusItem>选中 1 个项目</StatusItem>
        </StatusBar>
      </Window>

      <Watermark>CSDN @我先去打把游戏先</Watermark>
    </Desktop>
  );
}
